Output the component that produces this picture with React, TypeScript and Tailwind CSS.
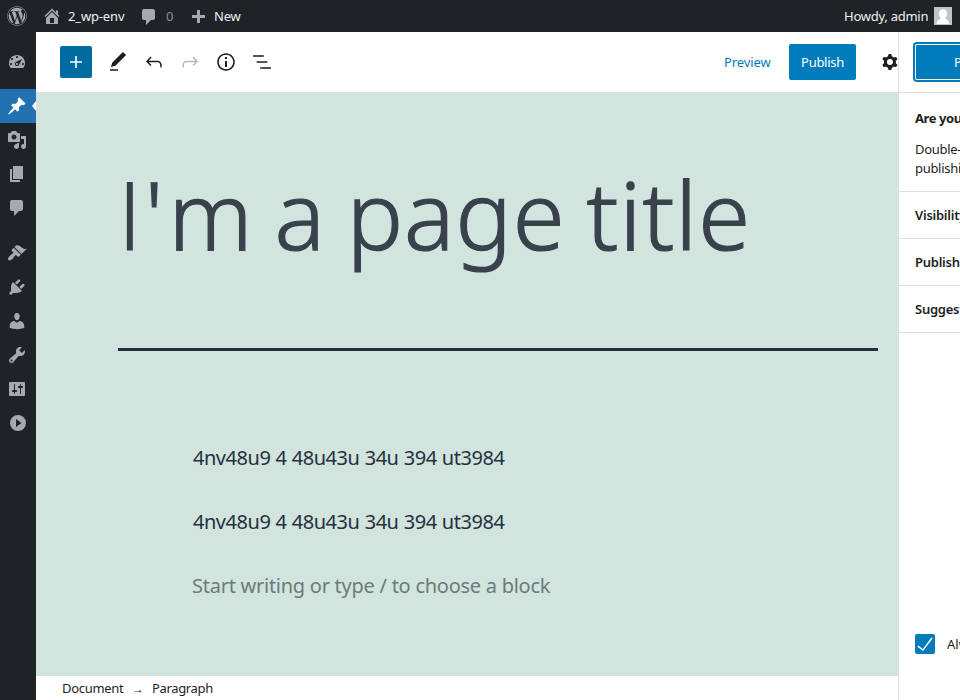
import React from "react";
import { FaWordpress } from "react-icons/fa";

const dash = {
  dashboard:
    "M3.76 17.01h12.48C17.34 15.63 18 13.9 18 12c0-4.41-3.58-8-8-8s-8 3.59-8 8c0 1.9.66 3.63 1.76 5.01zM9 6c0-.55.45-1 1-1s1 .45 1 1c0 .56-.45 1-1 1s-1-.44-1-1zM4 8c0-.55.45-1 1-1s1 .45 1 1c0 .56-.45 1-1 1s-1-.44-1-1zm4.52 3.4c.84-.83 6.51-3.5 6.51-3.5s-2.66 5.68-3.49 6.51c-.84.84-2.18.84-3.02 0-.83-.83-.83-2.18 0-3.01zM3 13c0-.55.45-1 1-1s1 .45 1 1c0 .56-.45 1-1 1s-1-.44-1-1zm6 0c0 .55.45 1 1 1s1-.45 1-1-.45-1-1-1-1 .45-1 1zm6 0c0-.55.45-1 1-1s1 .45 1 1c0 .56-.45 1-1 1s-1-.44-1-1z",
  post: "M10.44 3.02l1.82-1.82 6.36 6.35-1.83 1.82c-1.05-.68-2.48-.57-3.41.36l-.75.75c-.92.93-1.04 2.35-.35 3.41l-1.83 1.82-2.41-2.41-2.8 2.79c-.42.42-3.38 2.71-3.8 2.29s1.86-3.39 2.28-3.81l2.79-2.79L4.1 9.36l1.83-1.82c1.05.69 2.48.57 3.4-.36l.75-.75c.93-.92 1.05-2.35.36-3.41z",
  media:
    "M13 11V4c0-.55-.45-1-1-1h-1.67L9 1H5L3.67 3H2c-.55 0-1 .45-1 1v7c0 .55.45 1 1 1h10c.55 0 1-.45 1-1zM7 4.5c1.38 0 2.5 1.12 2.5 2.5S8.38 9.5 7 9.5 4.5 8.38 4.5 7 5.62 4.5 7 4.5zM14 6h5v10.5c0 1.38-1.12 2.5-2.5 2.5S14 17.88 14 16.5s1.12-2.5 2.5-2.5c.17 0 .34.02.5.05V9h-3V6zm-4 8.05V13h2v3.5c0 1.38-1.12 2.5-2.5 2.5S7 17.88 7 16.5 8.12 14 9.5 14c.17 0 .34.02.5.05z",
  page: "M6 15V2h10v13H6zm-1 1h8v2H3V5h2v11z",
  comments:
    "M5 2h9c1.1 0 2 .9 2 2v7c0 1.1-.9 2-2 2h-2l-5 5v-5H5c-1.1 0-2-.9-2-2V4c0-1.1.9-2 2-2z",
  appearance:
    "M14.48 11.06L7.41 3.99l1.5-1.5c.5-.56 2.3-.47 3.51.32 1.21.8 1.43 1.28 2.91 2.1 1.18.64 2.45 1.26 4.45.85zm-.71.71L6.7 4.7 4.93 6.47c-.39.39-.39 1.02 0 1.41l1.06 1.06c.39.39.39 1.03 0 1.42-.6.6-1.43 1.11-2.21 1.69-.35.26-.7.53-1.01.84C1.43 14.23.4 16.08 1.4 17.07c.99 1 2.84-.03 4.18-1.36.31-.31.58-.66.85-1.02.57-.78 1.08-1.61 1.69-2.21.39-.39 1.02-.39 1.41 0l1.06 1.06c.39.39 1.02.39 1.41 0z",
  plugins:
    "M13.11 4.36L9.87 7.6 8 5.73l3.24-3.24c.35-.34 1.05-.2 1.56.32.52.51.66 1.21.31 1.55zm-8 1.77l.91-1.12 9.01 9.01-1.19.84c-.71.71-2.63 1.16-3.82 1.16H6.14L4.9 17.26c-.59.59-1.54.59-2.12 0-.59-.58-.59-1.53 0-2.12l1.24-1.24v-3.88c0-1.13.4-3.19 1.09-3.89zm7.26 3.97l3.24-3.24c.34-.35 1.04-.21 1.55.31.52.51.66 1.21.31 1.55l-3.24 3.25z",
  users:
    "M10 9.25c-2.27 0-2.73-3.44-2.73-3.44C7 4.02 7.82 2 9.97 2c2.16 0 2.98 2.02 2.71 3.81 0 0-.41 3.44-2.68 3.44zm0 2.57L12.72 10c2.39 0 4.52 2.33 4.52 4.53v2.49s-3.65 1.13-7.24 1.13c-3.65 0-7.24-1.13-7.24-1.13v-2.49c0-2.25 1.94-4.48 4.47-4.48z",
  tools:
    "M16.68 9.77c-1.34 1.34-3.3 1.67-4.95.99l-5.41 6.52c-.99.99-2.59.99-3.58 0s-.99-2.59 0-3.57l6.52-5.42c-.68-1.65-.35-3.61.99-4.95 1.28-1.28 3.12-1.62 4.72-1.06l-2.89 2.89 2.82 2.82 2.86-2.87c.53 1.58.18 3.39-1.08 4.65zM3.81 16.21c.4.39 1.04.39 1.43 0 .4-.4.4-1.04 0-1.43-.39-.4-1.03-.4-1.43 0-.39.39-.39 1.03 0 1.43z",
  settings:
    "M18 16V4c0-.55-.45-1-1-1H3c-.55 0-1 .45-1 1v12c0 .55.45 1 1 1h14c.55 0 1-.45 1-1zM8 11h1c.55 0 1 .45 1 1s-.45 1-1 1H8v1.5c0 .28-.22.5-.5.5s-.5-.22-.5-.5V13H6c-.55 0-1-.45-1-1s.45-1 1-1h1V5.5c0-.28.22-.5.5-.5s.5.22.5.5V11zm5-2h-1c-.55 0-1-.45-1-1s.45-1 1-1h1V5.5c0-.28.22-.5.5-.5s.5.22.5.5V7h1c.55 0 1 .45 1 1s-.45 1-1 1h-1v5.5c0 .28-.22.5-.5.5s-.5-.22-.5-.5V9z",
  collapse: "M11 2a8 8 0 1 0 0 16a8 8 0 0 0 0-16zM9 6l5.5 4L9 14z",
  home: "M16 8.5l1.53 1.53-1.06 1.06L10 4.6l-6.47 6.49-1.06-1.06L10 2.5l4 4v-2h2v4zm-6-2.46l6 5.99V18H4v-5.97zM12 17v-5H8v5h4z",
  plus: "M17 7v3h-5v5H9v-5H4V7h5V2h3v5h5z",
};

const block = {
  plus: "M18 11.2h-5.2V6h-1.6v5.2H6v1.6h5.2V18h1.6v-5.2H18z",
  edit: "M20.1 5.1L16.9 2 6.2 12.7l-1.3 4.4 4.5-1.3L20.1 5.1zM4 20.8h8v-1.5H4v1.5z",
  undo: "M18.3 11.7c-.6-.6-1.4-.9-2.3-.9H6.7l2.9-3.3-1.1-1-4.5 5L8.5 16l1-1-2.7-2.7H16c.5 0 .9.2 1.3.5 1 1 1 3.4 1 4.5v.3h1.5v-.2c0-1.5 0-4.3-1.5-5.7z",
  redo: "M15.6 6.5l-1.1 1 2.9 3.3H8c-.9 0-1.7.3-2.3.9-1.4 1.5-1.4 4.2-1.4 5.6v.2h1.5v-.3c0-1.1 0-3.5 1-4.5.3-.3.7-.5 1.3-.5h9.2L14.5 15l1.1 1.1 4.6-4.6-4.6-5z",
  info: "M12 3.2c-4.8 0-8.8 3.9-8.8 8.8 0 4.8 3.9 8.8 8.8 8.8 4.8 0 8.8-3.9 8.8-8.8 0-4.8-4-8.8-8.8-8.8zm0 16c-4 0-7.2-3.3-7.2-7.2C4.8 8 8 4.8 12 4.8s7.2 3.3 7.2 7.2c0 4-3.2 7.2-7.2 7.2zM11 17h2v-6h-2v6zm0-8h2V7h-2v2z",
  list: "M13.8 5.2H3v1.5h10.8V5.2zm-3.6 12v1.5H21v-1.5H10.2zm7.2-6H6.6v1.5h10.8v-1.5z",
  cog: "M10.289 4.836A1 1 0 0111.275 4h1.306a1 1 0 01.987.836l.244 1.466c.787.26 1.503.679 2.108 1.218l1.393-.522a1 1 0 011.216.437l.653 1.13a1 1 0 01-.23 1.273l-1.148.944a6.025 6.025 0 010 2.435l1.149.946a1 1 0 01.23 1.272l-.653 1.13a1 1 0 01-1.216.437l-1.394-.522c-.605.54-1.32.958-2.108 1.218l-.244 1.466a1 1 0 01-.987.836h-1.306a1 1 0 01-.986-.836l-.244-1.466a5.995 5.995 0 01-2.108-1.218l-1.394.522a1 1 0 01-1.217-.436l-.653-1.131a1 1 0 01.23-1.272l1.149-.946a6.026 6.026 0 010-2.435l-1.148-.944a1 1 0 01-.23-1.272l.653-1.131a1 1 0 011.217-.437l1.393.522a5.994 5.994 0 012.108-1.218l.244-1.466zM14.929 12a3 3 0 11-6 0 3 3 0 016 0z",
  check: "M18.3 5.6L9.9 16.9l-4.6-3.4-.9 1.2 5.8 4.3 9.3-12.6z",
};

function Dashicon({ name, className = "" }: { name: keyof typeof dash; className?: string }) {
  return (
    <svg viewBox="0 0 20 20" className={`size-5 shrink-0 fill-current ${className}`}>
      <path fillRule="evenodd" d={dash[name]} />
    </svg>
  );
}

function BlockIcon({ name, className = "" }: { name: keyof typeof block; className?: string }) {
  return (
    <svg viewBox="0 0 24 24" className={`size-6 shrink-0 fill-current ${className}`}>
      <path fillRule="evenodd" d={block[name]} />
    </svg>
  );
}

function AdminBar() {
  return (
    <header className="flex h-8 shrink-0 items-center bg-[#1d2327] text-[13px] text-[#f0f0f1]">
      <FaWordpress className="ml-[7px] size-5 shrink-0 text-[#a7aaad]" />
      <Dashicon name="home" className="ml-[15px] text-[#a7aaad]" />
      <span className="ml-1.5 w-[57px] whitespace-nowrap pt-0.5 tracking-[-0.15px]">2_wp-env</span>
      <Dashicon name="comments" className="ml-[14px] mt-0.5 text-[#a7aaad]" />
      <span className="ml-[7px] w-2 pt-0.5 text-[#8c8f94]">0</span>
      <Dashicon name="plus" className="ml-[14px] mt-[3px] text-[#a7aaad]" />
      <span className="ml-[6px] pt-0.5 tracking-[-0.2px]">New</span>
      <span className="ml-auto w-[84px] whitespace-nowrap pt-0.5 tracking-[-0.25px]">Howdy, admin</span>
      <svg viewBox="0 0 18 18" className="ml-1.5 mr-2 size-[18px] shrink-0">
        <path fill="#c3c4c7" d="M0 0h18v18H0z" />
        <path fill="#fff" d="M9 2.2c2.8 0 4.1 1.8 4.1 4.3 0 1.9-.8 3.6-1.9 4.5 0 1.5 3.8 1.6 4.3 6H2.5c.5-4.4 4.3-4.5 4.3-6C5.7 10.1 4.9 8.4 4.9 6.5 4.9 4 6.2 2.2 9 2.2z" />
      </svg>
    </header>
  );
}

function AdminMenu() {
  const content = ["media", "page", "comments"] as const;
  const manage = ["appearance", "plugins", "users", "tools", "settings", "collapse"] as const;
  return (
    <nav className="flex w-9 shrink-0 flex-col bg-[#1d2327] pt-3 text-[#a7aaad]">
      <div className="mb-[11px] flex h-[34px] items-center pl-[7px]">
        <Dashicon name="dashboard" />
      </div>
      <div className="flex h-[34px] items-center justify-between bg-[#2271b1] pl-[7px] text-white">
        <Dashicon name="post" />
        <svg viewBox="0 0 4 10" className="h-2.5 w-1 fill-white">
          <path d="M4 0v10L0 5z" />
        </svg>
      </div>
      {content.map((name) => (
        <div key={name} className="flex h-[34px] items-center pl-[7px]">
          <Dashicon name={name} />
        </div>
      ))}
      <div className="h-[11px]" />
      {manage.map((name) => (
        <div key={name} className="flex h-[34px] items-center pl-[7px]">
          <Dashicon name={name} />
        </div>
      ))}
    </nav>
  );
}

function Toolbar() {
  return (
    <div className="flex h-[61px] shrink-0 items-center overflow-hidden border-b border-[#e0e0e0] pl-6">
      <button className="flex size-8 items-center justify-center rounded-[2px] bg-[#006ba1] text-white">
        <BlockIcon name="plus" />
      </button>
      <div className="ml-[14px] flex gap-3">
        <BlockIcon name="edit" />
        <BlockIcon name="undo" />
        <BlockIcon name="redo" className="text-[#b8b8b8]" />
        <BlockIcon name="info" />
        <BlockIcon name="list" />
      </div>
      <span className="ml-auto w-[47px] whitespace-nowrap pt-0.5 tracking-[-0.1px] text-[#007cba]">Preview</span>
      <button className="ml-[18px] flex h-9 w-[67px] items-center justify-center rounded-[2px] bg-[#007cba] pt-0.5 tracking-[-0.3px] text-white">
        Publish
      </button>
      <BlockIcon name="cog" className="-mr-[4px] ml-[22px]" />
    </div>
  );
}

function Canvas() {
  return (
    <main className="flex-1 overflow-hidden bg-[#d1e4dd] text-[#28303d]">
      <h1 className="ml-[82px] mt-[56px] h-[130px] w-[760px] whitespace-nowrap text-[94px] font-light leading-[130px] tracking-[1px] text-[#39414d] [-webkit-text-stroke:1.2px_#39414d] [word-spacing:-4.5px]">
        <span className="font-['Open_Sans',sans-serif] tracking-[3px]">I</span>
        <span className="tracking-[5px]">'</span>m a page title
      </h1>
      <div className="ml-[82px] mt-[69px] h-[3px] w-[760px] bg-[#28303d]" />
      <div className="ml-[156px] mt-[90px] flex flex-col gap-[30px] whitespace-nowrap text-[20px] leading-[34px]">
        <p className="pl-px tracking-[-0.47px] [word-spacing:0.5px]">4nv48u9 4 48u43u 34u 394 ut3984</p>
        <p className="pl-px tracking-[-0.47px] [word-spacing:0.5px]">4nv48u9 4 48u43u 34u 394 ut3984</p>
        <p className="tracking-[-0.26px] text-[#6c7b7c]">Start writing or type / to choose a block</p>
      </div>
    </main>
  );
}

function PublishPanel() {
  return (
    <aside className="w-[62px] shrink-0 overflow-hidden border-l border-[#dddddd] bg-white">
      <div className="flex h-full w-[280px] flex-col">
        <div className="flex h-[61px] shrink-0 items-center border-b border-[#dddddd] pl-4">
          <button className="h-9 w-[120px] rounded-[2px] bg-[#007cba] pl-[39px] pt-0.5 text-left text-white shadow-[inset_0_0_0_1px_#fff,0_0_0_2px_#007cba]">
            Publish
          </button>
        </div>
        <div className="h-[99px] border-b border-[#e0e0e0] pl-4 pt-4 leading-[19px]">
          <p className="whitespace-nowrap font-bold tracking-[-0.4px]">Are you ready to publish?</p>
          <p className="mt-3 tracking-[-0.3px]">
            Double-check your settings before
            <br />
            publishing.
          </p>
        </div>
        {["Visibility: Public", "Publish: Immediately", "Suggestion: Add tags"].map((label) => (
          <div
            key={label}
            className="flex h-[47px] items-center whitespace-nowrap border-b border-[#e0e0e0] pl-4 pt-0.5 font-semibold tracking-[-0.25px]"
          >
            {label}
          </div>
        ))}
        <label className="mb-[46px] mt-auto flex h-5 items-center whitespace-nowrap pl-4">
          <span className="mr-3 flex size-5 items-center justify-center rounded-[2px] bg-[#007cba] text-white">
            <BlockIcon name="check" />
          </span>
          <span className="pt-px">Always show pre-publish checks.</span>
        </label>
      </div>
    </aside>
  );
}

export default function App() {
  return (
    <div className="flex h-[700px] w-[960px] flex-col overflow-hidden bg-white font-['Noto_Sans','Open_Sans',sans-serif] text-[13px] text-[#1e1e1e]">
      <AdminBar />
      <div className="flex min-h-0 flex-1">
        <AdminMenu />
        <div className="flex min-w-0 flex-1 flex-col">
          <Toolbar />
          <Canvas />
          <footer className="flex h-6 shrink-0 items-center pl-[26px] pt-0.5">
            <span className="w-[62px] tracking-[-0.3px]">Document</span>
            <span className="ml-2 w-3 text-center text-[12px]">→</span>
            <span className="ml-[8px] tracking-[-0.35px]">Paragraph</span>
          </footer>
        </div>
        <PublishPanel />
      </div>
    </div>
  );
}
